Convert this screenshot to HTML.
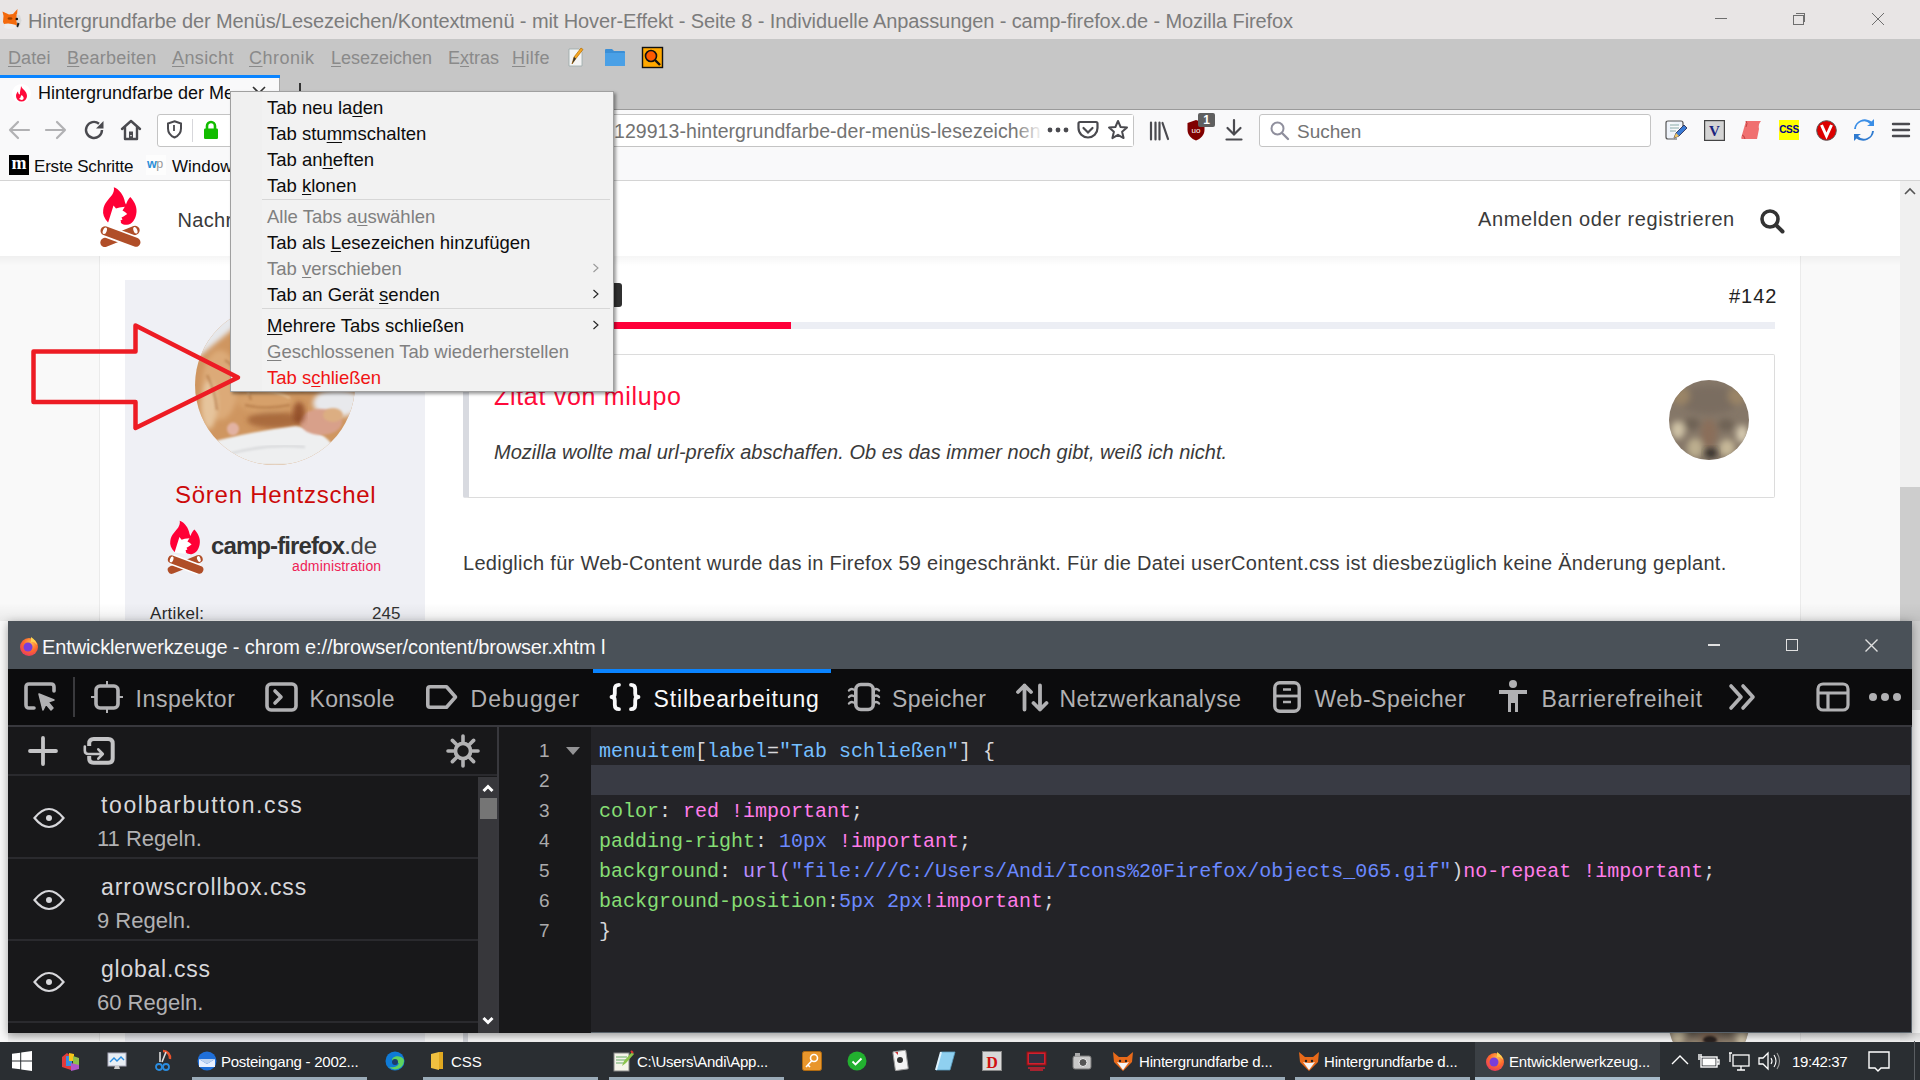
<!DOCTYPE html>
<html><head><meta charset="utf-8">
<style>
*{margin:0;padding:0;box-sizing:border-box}
html,body{width:1920px;height:1080px;overflow:hidden;background:#f9f9f9;font-family:"Liberation Sans",sans-serif}
.a{position:absolute}
.t{position:absolute;white-space:nowrap;line-height:1}
.u{text-decoration:underline;text-underline-offset:2px}
.m{font-family:"Liberation Mono",monospace}
svg{position:absolute;overflow:visible}
</style></head><body>

<!-- ============ TITLE BAR ============ -->
<div class="a" style="left:0;top:0;width:1920px;height:39px;background:#e8e5e5"></div>
<div class="t" style="left:28px;top:11px;font-size:20px;letter-spacing:-0.1px;color:#7c7c7c">Hintergrundfarbe der Menüs/Lesezeichen/Kontextmenü - mit Hover-Effekt - Seite 8 - Individuelle Anpassungen - camp-firefox.de - Mozilla Firefox</div>

<svg style="left:0;top:5px" width="30" height="30" viewBox="0 0 30 30"><path d="M2.5 6.5L9 9.5L13 9L17.5 4L17 10L16.5 16L17.5 20L14 21.5L5 21L3 17L3.5 11Z" fill="#f46a0c"/><path d="M16.5 9l3.5 1.5 1.5 5-1.5 5-3 1z" fill="#d8d8d8"/><path d="M4 19Q9 17.5 16 20L15 23.5Q9 24.5 4.5 23Z" fill="#ececec"/><circle cx="16.8" cy="14" r="1.3" fill="#111"/><path d="M17.5 17.5l2 1-1.5 4-1.5-1z" fill="#222"/><ellipse cx="10" cy="13.5" rx="2.5" ry="1.3" fill="#9a4000"/></svg>
<!-- ============ MENUBAR + TABSTRIP ============ -->
<div class="a" style="left:0;top:39px;width:1920px;height:71px;background:#c6c6c6"></div>
<div style="color:#8a8a8a;font-size:18px">
<div class="t" style="left:8px;top:49px;letter-spacing:0.1px"><span class="u">D</span>atei</div>
<div class="t" style="left:67px;top:49px;letter-spacing:0.24px"><span class="u">B</span>earbeiten</div>
<div class="t" style="left:172px;top:49px;letter-spacing:0.4px"><span class="u">A</span>nsicht</div>
<div class="t" style="left:249px;top:49px;letter-spacing:0.5px"><span class="u">C</span>hronik</div>
<div class="t" style="left:331px;top:49px;letter-spacing:0px"><span class="u">L</span>esezeichen</div>
<div class="t" style="left:448px;top:49px;letter-spacing:0px">E<span class="u">x</span>tras</div>
<div class="t" style="left:512px;top:49px;letter-spacing:0.4px"><span class="u">H</span>ilfe</div>
</div>
<!-- notepad icon -->
<svg style="left:566px;top:47px" width="20" height="20" viewBox="0 0 20 20">
<path d="M3 2h10l3 3v14H3z" fill="#f4f4f4" stroke="#9aa" stroke-width="0.8"/>
<path d="M6 17l2-7 7-9 2 1.5-7 9z" fill="#f5a623" stroke="#b36b00" stroke-width="0.7"/>
<path d="M6 17l2-7 2 1.5z" fill="#333"/>
</svg>
<!-- folder icon -->
<svg style="left:604px;top:47px" width="22" height="20" viewBox="0 0 22 20">
<path d="M1 3q0-1 1-1h6l2 2h10q1 0 1 1v13q0 1-1 1H2q-1 0-1-1z" fill="#3b8fd6"/>
<path d="M1 6h20v12q0 1-1 1H2q-1 0-1-1z" fill="#4aa0e6"/>
</svg>
<!-- orange search icon -->
<svg style="left:642px;top:47px" width="22" height="21" viewBox="0 0 22 21">
<rect x="0.5" y="0.5" width="20" height="20" fill="#ffa800" stroke="#111" stroke-width="1.4"/>
<circle cx="9" cy="9" r="5.5" fill="#ff5a00" stroke="#111" stroke-width="1.6"/>
<path d="M13 13l5 5" stroke="#111" stroke-width="2.4"/>
</svg>

<!-- selected tab -->
<div class="a" style="left:0;top:75px;width:280px;height:35px;background:#f9f9fa;border-right:1px solid #a8a8a8"></div>
<div class="a" style="left:0;top:75px;width:280px;height:3px;background:#0a84ff"></div>
<div class="a" style="left:12px;top:84px;width:19px;height:19px;border-radius:50%;background:#fff"></div>
<svg style="left:13px;top:86px" width="17" height="17" viewBox="0 0 17 17">
<path d="M8 0c1 3 6 5 6 10a5.5 5.5 0 0 1-11 0c0-2 1-3.5 2-4.5 0 2 1 3 2 3-.5-3 1-5.5 1-8.5z" fill="#ff0a3a"/>
<path d="M8.5 9c1.5 1 2.5 2 2 4a2.6 2.6 0 0 1-4.5-1c1 .5 1.5 0 1.5-1z" fill="#fff"/>
</svg>
<div class="t" style="left:38px;top:83px;width:192px;overflow:hidden;font-size:18px;color:#0c0c0d;letter-spacing:0px;line-height:20px">Hintergrundfarbe der Menüs</div>
<svg style="left:252px;top:86px" width="14" height="14" viewBox="0 0 14 14"><path d="M1 1l12 12M13 1L1 13" stroke="#333" stroke-width="1.6"/></svg>
<div class="a" style="left:299px;top:83px;width:2px;height:10px;background:#333"></div>

<!-- ============ NAV TOOLBAR ============ -->
<div class="a" style="left:281px;top:109px;width:1639px;height:1px;background:#9a9a9a"></div>
<div class="a" style="left:0;top:110px;width:1920px;height:70px;background:#f9f9fa"></div>
<div class="a" style="left:0;top:180px;width:1920px;height:1px;background:#d4d4d4"></div>
<!-- back / forward -->
<svg style="left:8px;top:120px" width="22" height="20" viewBox="0 0 22 20"><path d="M21 10H2M10 2L2 10l8 8" fill="none" stroke="#b1b1b3" stroke-width="2.2" stroke-linecap="round" stroke-linejoin="round"/></svg>
<svg style="left:45px;top:120px" width="22" height="20" viewBox="0 0 22 20"><path d="M1 10h19M12 2l8 8-8 8" fill="none" stroke="#b1b1b3" stroke-width="2.2" stroke-linecap="round" stroke-linejoin="round"/></svg>
<!-- reload -->
<svg style="left:84px;top:120px" width="22" height="20" viewBox="0 0 22 20"><path d="M18 10a8 8 0 1 1-3-6.3" fill="none" stroke="#4a4a4f" stroke-width="2.4"/><path d="M19.5 1v7.5H12z" fill="#4a4a4f"/></svg>
<!-- home -->
<svg style="left:120px;top:119px" width="22" height="22" viewBox="0 0 22 22"><path d="M2 10L11 2l9 8M5 8v12h12V8" fill="none" stroke="#4a4a4f" stroke-width="2.4" stroke-linejoin="round" stroke-linecap="round"/><rect x="9" y="12.5" width="4" height="7" fill="#4a4a4f"/><rect x="10.3" y="16" width="1.4" height="1.2" fill="#f9f9fa"/></svg>
<!-- url bar -->
<div class="a" style="left:157px;top:114px;width:977px;height:33px;background:#fff;border:1px solid #c4c4c4;border-radius:3px"></div>
<svg style="left:166px;top:120px" width="17" height="19" viewBox="0 0 17 19"><path d="M8.5 1.2L15 3.5v5c0 4.5-3 7.5-6.5 9-3.5-1.5-6.5-4.5-6.5-9v-5z" fill="none" stroke="#4a4a4f" stroke-width="2"/><path d="M8 5v6" stroke="#4a4a4f" stroke-width="1.8"/></svg>
<div class="a" style="left:192px;top:119px;width:1px;height:23px;background:#d7d7db"></div>
<svg style="left:203px;top:120px" width="16" height="20" viewBox="0 0 16 20"><path d="M4 9V6a4 4 0 0 1 8 0v3" fill="none" stroke="#12bc00" stroke-width="2.6"/><rect x="1" y="8.5" width="14" height="10.5" rx="1.2" fill="#12bc00"/></svg>
<div class="t" style="left:614px;top:121.5px;font-size:19.5px;color:#737373;letter-spacing:0.06px">129913-hintergrundfarbe-der-menüs-lesezeichen</div>
<div class="a" style="left:1015px;top:115px;width:28px;height:31px;background:linear-gradient(to right,rgba(255,255,255,0),#fff)"></div>
<div class="a" style="left:1043px;top:115px;width:90px;height:31px;background:#fff"></div>
<svg style="left:1047px;top:126px" width="22" height="8" viewBox="0 0 22 8"><circle cx="3" cy="4" r="2.4" fill="#4a4a4f"/><circle cx="11" cy="4" r="2.4" fill="#4a4a4f"/><circle cx="19" cy="4" r="2.4" fill="#4a4a4f"/></svg>
<svg style="left:1077px;top:120px" width="22" height="20" viewBox="0 0 22 20"><path d="M3 2h16q1.5 0 1.5 1.5V8a9.5 9.5 0 0 1-19 0V3.5Q1.5 2 3 2z" fill="none" stroke="#4a4a4f" stroke-width="2.2"/><path d="M6.5 8l4.5 4.5L15.5 8" fill="none" stroke="#4a4a4f" stroke-width="2.2" stroke-linecap="round"/></svg>
<svg style="left:1107px;top:119px" width="22" height="22" viewBox="0 0 22 22"><path d="M11 2l2.6 6 6.4.6-4.9 4.2 1.5 6.3L11 15.8 5.4 19.1l1.5-6.3L2 8.6l6.4-.6z" fill="none" stroke="#4a4a4f" stroke-width="2" stroke-linejoin="round"/></svg>
<!-- library -->
<svg style="left:1149px;top:121px" width="22" height="20" viewBox="0 0 22 20"><path d="M2 1.5v17M6.5 1.5v17M10.5 1.5v17M13.5 2l5.5 16" stroke="#4a4a4f" stroke-width="2.2" stroke-linecap="round"/></svg>
<!-- ublock -->
<svg style="left:1186px;top:119px" width="20" height="22" viewBox="0 0 20 22"><path d="M10 1l8.5 3v7c0 5-4 9-8.5 10.5C5.5 20 1.5 16 1.5 11V4z" fill="#800000"/><text x="10" y="14" font-size="8" fill="#fff" text-anchor="middle" font-family="Liberation Sans">uo</text></svg>
<div class="a" style="left:1198px;top:113px;width:17px;height:14px;background:#5f5f5f;border-radius:2px;color:#fff;font-size:12px;line-height:14px;text-align:center;font-weight:bold">1</div>
<!-- download -->
<svg style="left:1224px;top:119px" width="20" height="22" viewBox="0 0 20 22"><path d="M10 1v14M3.5 9l6.5 6.5L16.5 9M2.5 20.5h15" fill="none" stroke="#4a4a4f" stroke-width="2.2" stroke-linecap="round"/></svg>
<!-- search box -->
<div class="a" style="left:1259px;top:114px;width:392px;height:33px;background:#fff;border:1px solid #c4c4c4;border-radius:3px"></div>
<svg style="left:1270px;top:121px" width="20" height="20" viewBox="0 0 20 20"><circle cx="7.5" cy="7.5" r="6" fill="none" stroke="#8f8f9d" stroke-width="2"/><path d="M12 12l6 6" stroke="#8f8f9d" stroke-width="2.4" stroke-linecap="round"/></svg>
<div class="t" style="left:1297px;top:122px;font-size:19px;color:#737373">Suchen</div>
<!-- right icons -->
<svg style="left:1664px;top:119px" width="24" height="22" viewBox="0 0 24 22"><path d="M4 2h13q2 0 2 2v4M4 2q-2 0-2 2v14q0 2 2 2h9" fill="#eef3fa" stroke="#555" stroke-width="1.2"/><path d="M6 6h9M6 9h9M6 12h6" stroke="#8aa" stroke-width="1"/><path d="M10 19l2-5 8-8 3 3-8 8z" fill="#3a7bd5" stroke="#224" stroke-width="0.8"/><path d="M10 19l2-5 3 3z" fill="#f6c85f"/></svg>
<svg style="left:1704px;top:120px" width="21" height="21" viewBox="0 0 21 21"><rect x="0.6" y="0.6" width="19.8" height="19.8" fill="#d4d4d4" stroke="#444" stroke-width="1.2"/><text x="10.5" y="16" font-size="15" font-weight="bold" fill="#1a237e" text-anchor="middle" font-family="Liberation Serif">V</text></svg>
<svg style="left:1740px;top:120px" width="23" height="21" viewBox="0 0 23 21"><path d="M6 1h15q-3 3-2 8l-2 10H2q-1.5 0 0-4z" fill="#f07070"/><path d="M6 1q2 2 0 6" fill="none" stroke="#c04040" stroke-width="1"/><path d="M2 15q2 0 3 4" fill="none" stroke="#c04040" stroke-width="1"/></svg>
<div class="a" style="left:1779px;top:120px;width:20px;height:20px;background:#ffff00;color:#00008b;font-size:10px;font-weight:bold;line-height:20px;text-align:center;letter-spacing:-0.3px">CSS</div>
<svg style="left:1816px;top:120px" width="21" height="21" viewBox="0 0 21 21"><circle cx="10.5" cy="10.5" r="9.8" fill="#d00" stroke="#555" stroke-width="1"/><path d="M5.5 5l5 11 5-11" fill="none" stroke="#fff" stroke-width="3"/></svg>
<svg style="left:1853px;top:119px" width="22" height="22" viewBox="0 0 22 22"><path d="M3 10a8 8 0 0 1 14-5l-3 2h7V0l-2.5 2.5A11 11 0 0 0 1 10z" fill="#3a8ee6"/><path d="M19 12a8 8 0 0 1-14 5l3-2H1v7l2.5-2.5A11 11 0 0 0 21 12z" fill="#2f7bd0"/></svg>
<svg style="left:1892px;top:122px" width="18" height="16" viewBox="0 0 18 16"><path d="M1 2h16M1 8h16M1 14h16" stroke="#4a4a4f" stroke-width="2.4" stroke-linecap="round"/></svg>
<!-- window controls -->
<div class="a" style="left:1715px;top:18px;width:12px;height:1px;background:#6e6e6e"></div>
<div class="a" style="left:1793px;top:15px;width:11px;height:10px;border:1px solid #6e6e6e"></div>
<div class="a" style="left:1796px;top:13px;width:9px;height:9px;border-top:1px solid #6e6e6e;border-right:1px solid #6e6e6e"></div>
<svg style="left:1872px;top:13px" width="12" height="12" viewBox="0 0 12 12"><path d="M0 0l12 12M12 0L0 12" stroke="#6e6e6e" stroke-width="1"/></svg>
<!-- bookmarks toolbar -->
<div class="a" style="left:9px;top:155px;width:20px;height:20px;background:#000;color:#fff;font-family:'Liberation Serif';font-weight:bold;font-size:18px;line-height:17px;text-align:center">m</div>
<div class="t" style="left:34px;top:158px;font-size:17px;color:#0c0c0d;letter-spacing:-0.2px">Erste Schritte</div>
<div class="a" style="left:146px;top:155px;width:20px;height:20px;background:#fdfdfd"></div>
<div class="t" style="left:147px;top:158px;font-size:12.5px;font-weight:bold;color:#2d8fd8;letter-spacing:-0.6px">w<span style="color:#999;font-weight:normal">p</span></div>
<div class="t" style="left:172px;top:158px;font-size:17px;color:#0c0c0d">Windows</div>

<!-- ============ PAGE ============ -->
<div class="a" style="left:0;top:181px;width:1900px;height:75px;background:#fff"></div>
<div class="a" style="left:0;top:256px;width:1900px;height:785px;background:#f9f9f9"></div>
<div class="a" style="left:99px;top:256px;width:1702px;height:785px;background:#fff;border-left:1px solid #ebebeb;border-right:1px solid #ebebeb"></div>
<div class="a" style="left:1900px;top:181px;width:20px;height:860px;background:#f0f0f0"></div>
<div class="a" style="left:1900px;top:487px;width:20px;height:223px;background:#cdcdcd"></div>
<svg style="left:1903px;top:186px" width="14" height="10" viewBox="0 0 14 10"><path d="M2 8l5-5 5 5" fill="none" stroke="#555" stroke-width="1.6"/></svg>
<!-- header shadow -->
<div class="a" style="left:0;top:256px;width:1900px;height:10px;background:linear-gradient(rgba(0,0,0,0.04),rgba(0,0,0,0))"></div>
<!-- logo -->

<svg style="left:95px;top:183px" width="50" height="70" viewBox="0 0 50 70">
<path d="M18.8 4.2C24 6 29 12 30 19.5L31 21.5C32 18 33.5 16 35.3 14C39 18 42 23 41.5 29C41 36 37 41.5 32 41.8C27 42 25 40 26 38L13 39.5C9 35 7.5 31 8.2 27C9 20 14 16 17 12C18.5 9.5 19.5 7 18.8 4.2Z" fill="#ff0036"/>
<path d="M13 40L18.5 22.5L21 25.5L24.5 24.5L29.8 23.8L27.5 27.5L30 29L32.2 31L28.5 33.5L26.5 34.5L27.5 36.5L25.5 37.5L25 41.5Z" fill="#fff"/>
<path d="M9.8 59.5L40.2 47.3" stroke="#b04e28" stroke-width="9" stroke-linecap="round"/>
<path d="M10 47.8L41 59.3" stroke="#fff" stroke-width="12.5" stroke-linecap="butt"/>
<path d="M10 47.8L41 59.3" stroke="#b04e28" stroke-width="9" stroke-linecap="round"/>
<ellipse cx="9.8" cy="47.8" rx="1.9" ry="3.4" fill="#fff" transform="rotate(20 9.8 47.8)"/>
<ellipse cx="40.4" cy="47.3" rx="1.9" ry="3.4" fill="#fff" transform="rotate(-20 40.4 47.3)"/>
</svg>
<div class="t" style="left:177.5px;top:210px;font-size:20px;color:#3a3a3a;letter-spacing:0.3px">Nachrichten</div>
<div class="t" style="left:1478px;top:209px;font-size:20px;color:#3a3a3a;letter-spacing:0.6px">Anmelden oder registrieren</div>
<svg style="left:1759px;top:208px" width="27" height="26" viewBox="0 0 27 26"><circle cx="11" cy="11" r="8" fill="none" stroke="#333" stroke-width="3.6"/><path d="M17 17l6.5 6.5" stroke="#333" stroke-width="4" stroke-linecap="round"/></svg>
<!-- sidebar panel -->
<div class="a" style="left:125px;top:280px;width:300px;height:340px;background:#eff0f5"></div>
<svg style="left:195px;top:305px" width="160" height="160" viewBox="0 0 160 160">
<defs><clipPath id="cc"><circle cx="80" cy="80" r="80"/></clipPath><filter id="bl" x="-20%" y="-20%" width="140%" height="140%"><feGaussianBlur stdDeviation="2.5"/></filter><filter id="bl2"><feGaussianBlur stdDeviation="1"/></filter></defs>
<g clip-path="url(#cc)">
<rect width="160" height="160" fill="#cf9660"/>
<g filter="url(#bl)">
<path d="M0 0h70L40 22 18 40 0 55z" fill="#e6e8ec"/>
<ellipse cx="25" cy="80" rx="18" ry="35" fill="#dcaa78"/>
<ellipse cx="14" cy="100" rx="8" ry="24" fill="#e6c49c"/>
<ellipse cx="95" cy="55" rx="45" ry="28" fill="#d59a60"/>
<ellipse cx="70" cy="96" rx="28" ry="12" fill="#d6a06a"/>
<ellipse cx="80" cy="115" rx="28" ry="8" fill="#9a5a30" opacity="0.7"/>
<ellipse cx="142" cy="98" rx="24" ry="14" fill="#e8e9ec"/>
</g>
<path d="M0 142L24 135Q60 126 101 121Q124 124 136 138L160 146V160H0z" fill="#eeeff0" filter="url(#bl2)"/>
<path d="M30 150Q70 138 110 142" fill="none" stroke="#d9dadc" stroke-width="2.5" filter="url(#bl2)"/>
<ellipse cx="126" cy="117" rx="21" ry="13" fill="#d8a08a" filter="url(#bl2)"/>
<ellipse cx="138" cy="110" rx="10" ry="7" fill="#dcae82" filter="url(#bl2)"/>
<ellipse cx="104" cy="108" rx="6" ry="11" fill="#8a4424" opacity="0.8" filter="url(#bl)"/>
<ellipse cx="38" cy="124" rx="6" ry="6.5" fill="#e2b2a2" filter="url(#bl2)"/>
<path d="M30 55q18 12 26 40M12 70q8 15 10 35M70 78q20-6 38 8M60 40q30-5 60 10M85 65q15 3 30 15M50 100q20 5 45 0" fill="none" stroke="#a86c3a" stroke-width="2.5" opacity="0.5" filter="url(#bl2)"/>
<path d="M40 60q10 10 14 30M90 45q20 2 35 12M60 85q20 0 35 8" fill="none" stroke="#f0d2ac" stroke-width="2.5" opacity="0.55" filter="url(#bl2)"/>
</g></svg>
<div class="t" style="left:175px;top:483px;font-size:24px;color:#cc0a0a;letter-spacing:0.75px">Sören Hentzschel</div>
<svg style="left:163.3px;top:516.7px" width="44.4" height="62.2" viewBox="0 0 50 70">
<path d="M18.8 4.2C24 6 29 12 30 19.5L31 21.5C32 18 33.5 16 35.3 14C39 18 42 23 41.5 29C41 36 37 41.5 32 41.8C27 42 25 40 26 38L13 39.5C9 35 7.5 31 8.2 27C9 20 14 16 17 12C18.5 9.5 19.5 7 18.8 4.2Z" fill="#ff0036"/>
<path d="M13 40L18.5 22.5L21 25.5L24.5 24.5L29.8 23.8L27.5 27.5L30 29L32.2 31L28.5 33.5L26.5 34.5L27.5 36.5L25.5 37.5L25 41.5Z" fill="#fff"/>
<path d="M9.8 59.5L40.2 47.3" stroke="#b04e28" stroke-width="9" stroke-linecap="round"/>
<path d="M10 47.8L41 59.3" stroke="#fff" stroke-width="12.5" stroke-linecap="butt"/>
<path d="M10 47.8L41 59.3" stroke="#b04e28" stroke-width="9" stroke-linecap="round"/>
<ellipse cx="9.8" cy="47.8" rx="1.9" ry="3.4" fill="#fff" transform="rotate(20 9.8 47.8)"/>
<ellipse cx="40.4" cy="47.3" rx="1.9" ry="3.4" fill="#fff" transform="rotate(-20 40.4 47.3)"/>
</svg>
<div class="t" style="left:211px;top:534px;font-size:24px;font-weight:bold;color:#333;letter-spacing:-0.9px">camp-firefox<span style="font-weight:normal;color:#444;letter-spacing:-0.3px">.de</span></div>
<div class="t" style="left:292px;top:559px;font-size:14px;color:#ee2255;letter-spacing:0.15px">administration</div>
<div class="t" style="left:150px;top:604.6px;font-size:17px;color:#2a2a2a;letter-spacing:0.3px">Artikel:</div>
<div class="t" style="left:372px;top:604.6px;font-size:17px;color:#333">245</div>
<!-- post header -->
<div class="a" style="left:560px;top:283px;width:62px;height:24px;background:#303030;border-radius:3px"></div>
<div class="t" style="left:1729px;top:285.5px;font-size:20px;color:#222;letter-spacing:1px">#142</div>
<div class="a" style="left:463px;top:322px;width:1312px;height:7px;background:#eceef4"></div>
<div class="a" style="left:463px;top:322px;width:328px;height:7px;background:#ff0039"></div>
<!-- quote -->
<div class="a" style="left:463px;top:354px;width:1312px;height:144px;background:#fff;border:1px solid #dcdcdc;border-left:6px solid #d8dae0;border-radius:2px"></div>
<div class="t" style="left:494px;top:384px;font-size:25px;color:#ff0a3a;letter-spacing:0.7px">Zitat von milupo</div>
<div class="t" style="left:494px;top:442px;font-size:20px;font-style:italic;color:#3a3a3a;letter-spacing:0.02px">Mozilla wollte mal url-prefix abschaffen. Ob es das immer noch gibt, weiß ich nicht.</div>
<svg style="left:1669px;top:380px" width="80" height="80" viewBox="0 0 80 80">
<defs><clipPath id="wc"><circle cx="40" cy="40" r="40"/></clipPath><filter id="wb" x="-30%" y="-30%" width="160%" height="160%"><feGaussianBlur stdDeviation="3"/></filter></defs>
<g clip-path="url(#wc)"><rect width="80" height="80" fill="#857768"/>
<g filter="url(#wb)">
<ellipse cx="40" cy="20" rx="30" ry="14" fill="#7a6d60"/>
<ellipse cx="12" cy="16" rx="9" ry="9" fill="#9a8466"/>
<ellipse cx="68" cy="16" rx="9" ry="9" fill="#9a8466"/>
<ellipse cx="9" cy="50" rx="7" ry="9" fill="#cfc3a6"/>
<ellipse cx="73" cy="54" rx="6" ry="9" fill="#d6cab0"/>
<ellipse cx="26" cy="68" rx="8" ry="10" fill="#bcae8e"/>
<ellipse cx="58" cy="68" rx="8" ry="9" fill="#c6b898"/>
<ellipse cx="40" cy="54" rx="8" ry="15" fill="#8a6e5a"/>
<ellipse cx="23" cy="44" rx="8" ry="6" fill="#6e6254"/>
<ellipse cx="57" cy="45" rx="8" ry="6" fill="#6e6254"/>
</g>
<ellipse cx="42" cy="73" rx="6" ry="4.5" fill="#2a2622" filter="url(#wb)"/>
</g></svg>
<div class="t" style="left:463px;top:553px;font-size:20px;color:#3a3a3a;letter-spacing:0.285px">Lediglich für Web-Content wurde das in Firefox 59 eingeschränkt. Für die Datei userContent.css ist diesbezüglich keine Änderung geplant.</div>
<!-- bottom shadow under devtools window top -->
<div class="a" style="left:0;top:603px;width:1920px;height:18px;background:linear-gradient(rgba(0,0,0,0),rgba(0,0,0,0.06))"></div>

<div class="a" style="left:125px;top:1033px;width:300px;height:9px;background:#eff0f5"></div>
<div class="a" style="left:463px;top:1033px;width:5px;height:9px;background:#d8dae0"></div>
<svg style="left:1669px;top:985px" width="80" height="80" viewBox="0 0 80 80">
<defs><clipPath id="wc2"><circle cx="40" cy="40" r="40"/></clipPath><filter id="wb2" x="-30%" y="-30%" width="160%" height="160%"><feGaussianBlur stdDeviation="3"/></filter></defs>
<g clip-path="url(#wc2)"><rect width="80" height="80" fill="#857768"/>
<g filter="url(#wb2)">
<ellipse cx="40" cy="20" rx="30" ry="14" fill="#7a6d60"/>
<ellipse cx="12" cy="16" rx="9" ry="9" fill="#9a8466"/>
<ellipse cx="68" cy="16" rx="9" ry="9" fill="#9a8466"/>
<ellipse cx="9" cy="50" rx="7" ry="9" fill="#cfc3a6"/>
<ellipse cx="73" cy="54" rx="6" ry="9" fill="#d6cab0"/>
<ellipse cx="26" cy="68" rx="8" ry="10" fill="#bcae8e"/>
<ellipse cx="58" cy="68" rx="8" ry="9" fill="#c6b898"/>
<ellipse cx="40" cy="54" rx="8" ry="15" fill="#8a6e5a"/>
<ellipse cx="23" cy="44" rx="8" ry="6" fill="#6e6254"/>
<ellipse cx="57" cy="45" rx="8" ry="6" fill="#6e6254"/>
</g>
<ellipse cx="42" cy="73" rx="6" ry="4.5" fill="#2a2622" filter="url(#wb2)"/>
</g></svg>
<div class="a" style="left:1703px;top:1036px;width:14px;height:8px;border-radius:50%;background:#2a2220;filter:blur(1.2px)"></div>
<!-- ============ CONTEXT MENU ============ -->
<div class="a" style="left:230px;top:91px;width:384px;height:301px;background:#f2f2f2;border:1px solid #a0a0a0;box-shadow:2px 2px 3px rgba(0,0,0,0.38)"></div>
<div class="a" style="left:231px;top:92px;width:31px;height:299px;background:#f0f0f0"></div>
<div class="a" style="left:262px;top:199px;width:348px;height:1px;background:#d7d7d7"></div>
<div class="a" style="left:262px;top:308px;width:348px;height:1px;background:#d7d7d7"></div>
<div style="font-size:18.5px;color:#0c0c0c">
<div class="t" style="left:267px;top:99.3px">Tab neu la<span class="u">d</span>en</div>
<div class="t" style="left:267px;top:125.3px">Tab stu<span class="u">m</span>mschalten</div>
<div class="t" style="left:267px;top:151.3px">Tab an<span class="u">h</span>eften</div>
<div class="t" style="left:267px;top:177.3px">Tab <span class="u">k</span>lonen</div>
<div class="t" style="left:267px;top:208.3px;color:#808080">Alle Tabs a<span class="u">u</span>swählen</div>
<div class="t" style="left:267px;top:234.3px">Tab als <span class="u">L</span>esezeichen hinzufügen</div>
<div class="t" style="left:267px;top:260.3px;color:#808080">Tab <span class="u">v</span>erschieben</div>
<div class="t" style="left:267px;top:285.8px">Tab an Gerät <span class="u">s</span>enden</div>
<div class="t" style="left:267px;top:316.8px"><span class="u">M</span>ehrere Tabs schließen</div>
<div class="t" style="left:267px;top:343px;color:#808080"><span class="u">G</span>eschlossenen Tab wiederherstellen</div>
<div class="t" style="left:267px;top:369px;color:#f01414">Tab s<span class="u">c</span>hließen</div>
</div>
<svg style="left:592px;top:263px" width="8" height="10" viewBox="0 0 8 10"><path d="M1.5 1l4.5 4-4.5 4" fill="none" stroke="#999" stroke-width="1.1"/></svg>
<svg style="left:592px;top:289px" width="8" height="10" viewBox="0 0 8 10"><path d="M1.5 1l4.5 4-4.5 4" fill="none" stroke="#222" stroke-width="1.1"/></svg>
<svg style="left:592px;top:320px" width="8" height="10" viewBox="0 0 8 10"><path d="M1.5 1l4.5 4-4.5 4" fill="none" stroke="#222" stroke-width="1.1"/></svg>

<!-- ============ RED ARROW ============ -->
<svg style="left:0;top:0" width="300" height="450" viewBox="0 0 300 450"><path d="M33.5 351.5H135.5V325.5L238 377.5L135.5 428V402H33.5Z" fill="none" stroke="#ed1c24" stroke-width="4.5" stroke-linejoin="round"/></svg>

<!-- ============ DEVTOOLS ============ -->
<div class="a" style="left:8px;top:621px;width:1904px;height:412px;background:#232327;box-shadow:0 2px 9px rgba(0,0,0,0.35);border:1px solid #59626a"></div>
<div class="a" style="left:8px;top:621px;width:1904px;height:48px;background:#4a5158"></div>
<svg style="left:18px;top:635px" width="22" height="22" viewBox="0 0 22 22"><defs><radialGradient id="ffg" cx="0.6" cy="0.3" r="0.8"><stop offset="0" stop-color="#ffbd4f"/><stop offset="0.5" stop-color="#ff6a2b"/><stop offset="1" stop-color="#e3316b"/></radialGradient></defs><circle cx="11" cy="12" r="9" fill="url(#ffg)"/><circle cx="10" cy="12" r="4.5" fill="#7a3ddb"/><path d="M13 2q5 3 6 8-3-4-6-3z" fill="#ffd34f"/></svg>
<div class="t" style="left:42px;top:637px;font-size:20px;color:#f9f9fa;letter-spacing:-0.13px">Entwicklerwerkzeuge - chrom e://browser/content/browser.xhtm l</div>
<div class="a" style="left:1708px;top:644px;width:12px;height:1.5px;background:#e0e0e0"></div>
<div class="a" style="left:1786px;top:639px;width:12px;height:12px;border:1.5px solid #e0e0e0"></div>
<svg style="left:1865px;top:639px" width="13" height="13" viewBox="0 0 13 13"><path d="M.5.5l12 12M12.5.5l-12 12" stroke="#e0e0e0" stroke-width="1.4"/></svg>
<!-- toolbar -->
<div class="a" style="left:8px;top:669px;width:1904px;height:56px;background:#0c0c0d"></div>
<div class="a" style="left:8px;top:725px;width:1904px;height:2px;background:#38383d"></div>
<div class="a" style="left:593px;top:669px;width:238px;height:4px;background:#0a84ff"></div>
<svg style="left:24px;top:682px" width="34" height="30" viewBox="0 0 34 30" fill="none" stroke="#b1b1b3" stroke-width="3.6" stroke-linecap="round" stroke-linejoin="round"><path d="M10 26H5q-3 0-3-3V5q0-3 3-3h22q3 0 3 3v4"/><path d="M15 12l15 6-6 2 5 6-2 2-5-6-3 6z" fill="#b1b1b3" stroke-width="1.5"/></svg>
<div class="a" style="left:73px;top:677px;width:2px;height:40px;background:#3a3a3d"></div>
<svg style="left:90px;top:680px" width="34" height="34" viewBox="0 0 34 34" fill="none" stroke="#b1b1b3" stroke-width="3.6"><rect x="6" y="6" width="22" height="22" rx="4"/><path d="M17 1v5M17 28v5M1 17h5M28 17h5" stroke-width="2"/></svg>
<div class="t" style="left:135.5px;top:688px;font-size:23px;color:#b1b1b3;letter-spacing:0.6px">Inspektor</div>
<svg style="left:265px;top:682px" width="34" height="30" viewBox="0 0 34 30" fill="none" stroke="#b1b1b3" stroke-width="3.6"><rect x="2" y="2" width="29" height="26" rx="4"/><path d="M10 9l6 6-6 6" stroke-linecap="round" stroke-linejoin="round"/></svg>
<div class="t" style="left:309.5px;top:688px;font-size:23px;color:#b1b1b3;letter-spacing:0.3px">Konsole</div>
<svg style="left:425px;top:682px" width="44" height="30" viewBox="0 0 44 30" fill="none" stroke="#b1b1b3" stroke-width="3.6" stroke-linejoin="round"><path d="M5 4.8H21.5L30.5 15L21.5 25.2H5Q2.8 25.2 2.8 23V7Q2.8 4.8 5 4.8Z"/></svg>
<div class="t" style="left:470.5px;top:688px;font-size:23px;color:#b1b1b3;letter-spacing:1.1px">Debugger</div>
<svg style="left:608px;top:681px" width="34" height="32" viewBox="0 0 34 32" fill="none" stroke="#f9f9fa" stroke-width="3.8" stroke-linecap="round" stroke-linejoin="round"><path d="M11 3.8Q6.8 3.8 6.8 8V12.5Q6.8 16 3.5 16Q6.8 16 6.8 19.5V24Q6.8 28.2 11 28.2M23 3.8Q27.2 3.8 27.2 8V12.5Q27.2 16 30.5 16Q27.2 16 27.2 19.5V24Q27.2 28.2 23 28.2"/></svg>
<div class="t" style="left:653.5px;top:688px;font-size:23px;color:#f9f9fa;letter-spacing:0.85px">Stilbearbeitung</div>
<svg style="left:847px;top:681px" width="34" height="32" viewBox="0 0 34 32" fill="none" stroke="#b1b1b3" stroke-width="3.6"><rect x="8.8" y="3.5" width="17.4" height="25" rx="5"/><path d="M2 9.5q2-2.2 4.5-1M2 16q2-2.2 4.5-1M2 22.5q2-2.2 4.5-1M32 9.5q-2-2.2-4.5-1M32 16q-2-2.2-4.5-1M32 22.5q-2-2.2-4.5-1" stroke-width="2.4" stroke-linecap="round"/></svg>
<div class="t" style="left:892px;top:688px;font-size:23px;color:#b1b1b3;letter-spacing:0.45px">Speicher</div>
<svg style="left:1015px;top:681px" width="34" height="32" viewBox="0 0 34 32" fill="none" stroke="#b1b1b3" stroke-width="3.8" stroke-linecap="round" stroke-linejoin="round"><path d="M9.5 28.5V4.5M3 11l6.5-6.5L16 11M25 4.5v24M18.5 22l6.5 6.5 6.5-6.5"/></svg>
<div class="t" style="left:1059.5px;top:688px;font-size:23px;color:#b1b1b3;letter-spacing:0.45px">Netzwerkanalyse</div>
<svg style="left:1272px;top:680px" width="30" height="34" viewBox="0 0 30 34" fill="none" stroke="#b1b1b3" stroke-width="3.4"><rect x="2.8" y="2.8" width="24.4" height="28.4" rx="5"/><path d="M2.8 16H27.2" stroke-width="2.8"/><path d="M11 9.5H19M11 22H19" stroke-width="2.4"/></svg>
<div class="t" style="left:1314.5px;top:688px;font-size:23px;color:#b1b1b3;letter-spacing:0.5px">Web-Speicher</div>
<svg style="left:1498px;top:680px" width="30" height="34" viewBox="0 0 30 34" fill="#b1b1b3"><circle cx="15" cy="4" r="4"/><path d="M1 10h28v4h-9v18h-3v-9h-4v9h-3V14H1z"/></svg>
<div class="t" style="left:1541.5px;top:688px;font-size:23px;color:#b1b1b3;letter-spacing:0.65px">Barrierefreiheit</div>
<svg style="left:1728px;top:684px" width="28" height="26" viewBox="0 0 28 26" fill="none" stroke="#b1b1b3" stroke-width="3.6" stroke-linecap="round" stroke-linejoin="round"><path d="M3 2l10 11L3 24M15 2l10 11-10 11"/></svg>
<svg style="left:1816px;top:682px" width="34" height="30" viewBox="0 0 34 30" fill="none" stroke="#b1b1b3" stroke-width="3.2"><rect x="2" y="2" width="30" height="26" rx="5"/><path d="M2 11h30M12 11v17"/></svg>
<svg style="left:1868px;top:690px" width="34" height="14" viewBox="0 0 34 14" fill="#b1b1b3"><circle cx="5" cy="7" r="4"/><circle cx="17" cy="7" r="4"/><circle cx="29" cy="7" r="4"/></svg>
<!-- sidebar -->
<div class="a" style="left:8px;top:727px;width:489px;height:306px;background:#18181a"></div>
<div class="a" style="left:8px;top:774px;width:489px;height:2px;background:#2a2a2e"></div>
<svg style="left:28px;top:736px" width="30" height="30" viewBox="0 0 30 30" stroke="#c4c4c6" stroke-width="3.8" stroke-linecap="round"><path d="M15 2v26M2 15h26"/></svg>
<svg style="left:80px;top:734px" width="40" height="34" viewBox="0 0 40 34" fill="none" stroke="#c4c4c6" stroke-linecap="round" stroke-linejoin="round"><path d="M9.2 12V9.5Q9.2 5 13.7 5H28.2Q32.7 5 32.7 9.5V24.3Q32.7 28.8 28.2 28.8H13.7Q9.2 28.8 9.2 24.3V22" stroke-width="4" stroke-linecap="butt"/><path d="M4.8 12.5V16.5Q4.8 20 8.3 20H22.5M18.3 15.3L22.8 20L18.3 24.7" stroke-width="2.6"/></svg>
<svg style="left:446px;top:734px" width="34" height="34" viewBox="0 0 34 34" fill="none" stroke="#b1b1b3"><circle cx="17" cy="17" r="7.6" stroke-width="3.8"/><path d="M26.50 17.00L32.00 17.00M23.72 23.72L27.61 27.61M17.00 26.50L17.00 32.00M10.28 23.72L6.39 27.61M7.50 17.00L2.00 17.00M10.28 10.28L6.39 6.39M17.00 7.50L17.00 2.00M23.72 10.28L27.61 6.39" stroke-width="3.6" stroke-linecap="round"/></svg>
<div class="a" style="left:478px;top:777px;width:19px;height:256px;background:#37373b"></div>
<div class="a" style="left:480px;top:798px;width:17px;height:21px;background:#757575"></div>
<svg style="left:481px;top:783px" width="14" height="10" viewBox="0 0 14 10"><path d="M2.5 8l4.5-4.5 4.5 4.5" fill="none" stroke="#fff" stroke-width="3"/></svg>
<svg style="left:481px;top:1016px" width="14" height="10" viewBox="0 0 14 10"><path d="M2.5 2l4.5 4.5 4.5-4.5" fill="none" stroke="#fff" stroke-width="3"/></svg>
<div class="a" style="left:8px;top:857px;width:470px;height:2px;background:#2a2a2e"></div>
<div class="a" style="left:8px;top:939px;width:470px;height:2px;background:#2a2a2e"></div>
<div class="a" style="left:8px;top:1021px;width:470px;height:2px;background:#2a2a2e"></div>
<svg style="left:33px;top:807px" width="32" height="22" viewBox="0 0 32 22" fill="none" stroke="#d7d7db" stroke-width="2.2"><path d="M1.5 11Q16-7 30.5 11 16 29 1.5 11z"/><circle cx="16" cy="11" r="3" fill="#d7d7db" stroke="none"/></svg>
<svg style="left:33px;top:889px" width="32" height="22" viewBox="0 0 32 22" fill="none" stroke="#d7d7db" stroke-width="2.2"><path d="M1.5 11Q16-7 30.5 11 16 29 1.5 11z"/><circle cx="16" cy="11" r="3" fill="#d7d7db" stroke="none"/></svg>
<svg style="left:33px;top:971px" width="32" height="22" viewBox="0 0 32 22" fill="none" stroke="#d7d7db" stroke-width="2.2"><path d="M1.5 11Q16-7 30.5 11 16 29 1.5 11z"/><circle cx="16" cy="11" r="3" fill="#d7d7db" stroke="none"/></svg>
<div class="t" style="left:101px;top:793.5px;font-size:23px;color:#d7d7db;letter-spacing:1.6px">toolbarbutton.css</div>
<div class="t" style="left:97px;top:828.2px;font-size:22px;color:#b1b1b3;letter-spacing:0px">11 Regeln.</div>
<div class="t" style="left:101px;top:875.5px;font-size:23px;color:#d7d7db;letter-spacing:0.95px">arrowscrollbox.css</div>
<div class="t" style="left:97px;top:910.3px;font-size:22px;color:#b1b1b3;letter-spacing:0px">9 Regeln.</div>
<div class="t" style="left:101px;top:957.5px;font-size:23px;color:#d7d7db;letter-spacing:0.75px">global.css</div>
<div class="t" style="left:97px;top:992.2px;font-size:22px;color:#b1b1b3;letter-spacing:0px">60 Regeln.</div>
<!-- divider -->
<div class="a" style="left:497px;top:727px;width:2px;height:306px;background:#38383d"></div>
<!-- editor -->
<div class="a" style="left:499px;top:727px;width:92px;height:306px;background:#18181a"></div>
<div class="a" style="left:591px;top:765px;width:1319px;height:30px;background:#393b44"></div>
<div style="font-size:19px;color:#ababad">
<div class="t" style="left:519.5px;top:741px;width:30px;text-align:right">1</div>
<div class="t" style="left:519.5px;top:771px;width:30px;text-align:right">2</div>
<div class="t" style="left:519.5px;top:801px;width:30px;text-align:right">3</div>
<div class="t" style="left:519.5px;top:831px;width:30px;text-align:right">4</div>
<div class="t" style="left:519.5px;top:861px;width:30px;text-align:right">5</div>
<div class="t" style="left:519.5px;top:891px;width:30px;text-align:right">6</div>
<div class="t" style="left:519.5px;top:921px;width:30px;text-align:right">7</div>
</div>
<svg style="left:566px;top:747px" width="14" height="9" viewBox="0 0 14 9"><path d="M0 0h14L7 8z" fill="#939395"/></svg>
<div class="m" style="position:absolute;left:599px;top:737px;font-size:20px;line-height:30px;color:#d7d7db">
<div style="white-space:pre;height:30px"><span style="color:#75bfff">menuitem</span>[<span style="color:#75bfff">label</span>=<span style="color:#75bfff">"Tab schließen"</span>] {</div>
<div style="white-space:pre;height:30px"> </div>
<div style="white-space:pre;height:30px"><span style="color:#86de74">color</span>: <span style="color:#ff7de9">red !important</span>;</div>
<div style="white-space:pre;height:30px"><span style="color:#86de74">padding-right</span>: <span style="color:#6b89ff">10px</span> <span style="color:#ff7de9">!important</span>;</div>
<div style="white-space:pre;height:30px"><span style="color:#86de74">background</span>: <span style="color:#b98eff">url(</span><span style="color:#6b89ff">"file:///C:/Users/Andi/Icons%20Firefox/objects_065.gif"</span>)<span style="color:#ff7de9">no-repeat !important</span>;</div>
<div style="white-space:pre;height:30px"><span style="color:#86de74">background-position</span>:<span style="color:#6b89ff">5px 2px</span><span style="color:#ff7de9">!important</span>;</div>
<div style="white-space:pre;height:30px">}</div>
</div>

<!-- ============ TASKBAR ============ -->
<div class="a" style="left:8px;top:1033px;width:1912px;height:9px;background:linear-gradient(rgba(0,0,0,0.1),rgba(0,0,0,0.02))"></div>
<div class="a" style="left:0;top:1042px;width:1920px;height:38px;background:#2a2e32"></div>
<div class="a" style="left:1475px;top:1042px;width:185px;height:38px;background:#3b4045"></div>
<div class="a" style="left:192px;top:1077px;width:175px;height:3px;background:#9aabb8"></div>
<div class="a" style="left:423px;top:1077px;width:175px;height:3px;background:#9aabb8"></div>
<div class="a" style="left:609px;top:1077px;width:175px;height:3px;background:#9aabb8"></div>
<div class="a" style="left:1110px;top:1077px;width:175px;height:3px;background:#9aabb8"></div>
<div class="a" style="left:1295px;top:1077px;width:175px;height:3px;background:#9aabb8"></div>
<div class="a" style="left:1475px;top:1077px;width:185px;height:3px;background:#a8bccb"></div>
<!-- windows logo -->
<svg style="left:12px;top:1051px" width="20" height="20" viewBox="0 0 20 20" fill="#fff"><path d="M0 2.8l8.2-1.1v7.9H0zM9.2 1.5L20 0v9.6H9.2zM0 10.4h8.2v7.9L0 17.2zM9.2 10.4H20V20L9.2 18.5z"/></svg>
<!-- colorful app -->
<svg style="left:61px;top:1051px" width="20" height="20" viewBox="0 0 20 20"><path d="M1 6l5-4 4 3v14l-9-3z" fill="#e23b3b"/><path d="M5 5h6v10H5z" fill="#3a8fe0"/><path d="M8 2l5 1v7H8z" fill="#f5c518"/><path d="M12 5l6 2v9l-6 2z" fill="#8fc04a"/><path d="M10 12l8 2v4l-8 2z" fill="#b056c8"/></svg>
<!-- monitor -->
<svg style="left:107px;top:1052px" width="20" height="19" viewBox="0 0 20 19"><rect x="1" y="1" width="18" height="13" fill="#e8eef4" stroke="#aab" stroke-width="1"/><path d="M3 10l4-4 3 3 4-4 3 3" fill="none" stroke="#2a8de0" stroke-width="1.4"/><path d="M7 17h6l-1-3H8z" fill="#ccc"/></svg>
<!-- scissors -->
<svg style="left:154px;top:1050px" width="18" height="22" viewBox="0 0 18 22"><path d="M9 1a7 7 0 0 1 7 8" fill="none" stroke="#e8522c" stroke-width="2.4"/><path d="M6 2v10M12 2L8 12" stroke="#ddd" stroke-width="1.6"/><circle cx="5" cy="17" r="3" fill="none" stroke="#2a8de0" stroke-width="1.8"/><circle cx="12" cy="17" r="3" fill="none" stroke="#2a8de0" stroke-width="1.8"/></svg>
<!-- thunderbird -->
<svg style="left:196px;top:1050px" width="21" height="22" viewBox="0 0 21 22"><circle cx="11" cy="11" r="9.5" fill="#1f6fd8"/><path d="M3 9l8 5 8-5v8H3z" fill="#e8f0ff"/><path d="M3 9h16l-8 5z" fill="#c0d4f0"/></svg>
<div class="t" style="left:221px;top:1054px;font-size:15px;color:#fff;letter-spacing:-0.25px">Posteingang - 2002...</div>
<!-- edge -->
<svg style="left:385px;top:1051px" width="20" height="20" viewBox="0 0 20 20"><circle cx="10" cy="10" r="9.5" fill="#0f7bd7"/><path d="M19 10a9 9 0 0 1-15 6c4 1 9 0 10-4-3 1-6 0-7-3 0-3 5-5 9-3 2 1 3 2 3 4z" fill="#5fd35f"/><circle cx="10" cy="11" r="3" fill="#1c3d6e"/></svg>
<!-- folder -->
<svg style="left:430px;top:1051px" width="14" height="20" viewBox="0 0 14 20"><path d="M1 3l8-2v18l-8-2z" fill="#f0c040"/><path d="M9 1h4v17H9z" fill="#e0a820"/></svg>
<div class="t" style="left:451px;top:1054px;font-size:15px;color:#fff">CSS</div>
<!-- notepad++ -->
<svg style="left:613px;top:1050px" width="21" height="22" viewBox="0 0 21 22"><rect x="1" y="3" width="15" height="18" fill="#f4f4e8" stroke="#888" stroke-width="1"/><path d="M3 7h11M3 10h11M3 13h8" stroke="#6a6" stroke-width="1"/><path d="M9 16l2-5 8-9 2 2-8 9z" fill="#8bc34a"/><path d="M18 1l2 2" stroke="#d33" stroke-width="2"/></svg>
<div class="t" style="left:637px;top:1054px;font-size:15px;color:#fff;letter-spacing:-0.25px">C:\Users\Andi\App...</div>
<svg style="left:802px;top:1051px" width="20" height="20" viewBox="0 0 20 20"><rect x="0.5" y="0.5" width="19" height="19" rx="2" fill="#e8962c" stroke="#b06a10"/><circle cx="12" cy="7" r="3.5" fill="none" stroke="#fff" stroke-width="1.6"/><path d="M10 9.5L4 16M6 14l2 2" stroke="#fff" stroke-width="1.6"/></svg>
<svg style="left:847px;top:1051px" width="20" height="20" viewBox="0 0 20 20"><circle cx="10" cy="10" r="9.5" fill="#22b02f"/><path d="M5.5 10.5l3 3 6-6" fill="none" stroke="#fff" stroke-width="1.8"/></svg>
<svg style="left:892px;top:1050px" width="17" height="22" viewBox="0 0 17 22"><rect x="2" y="1" width="13" height="19" rx="1" fill="#f4f4f4" stroke="#999" transform="rotate(-8 8 10)"/><circle cx="8" cy="10" r="3" fill="#333"/><path d="M3 2h3v3" fill="#c33"/></svg>
<svg style="left:935px;top:1051px" width="21" height="20" viewBox="0 0 21 20"><path d="M6 1h14l-5 18H1z" fill="#8fd0f0" stroke="#5a9ec0" stroke-width="0.8"/><path d="M6 1l-5 18" stroke="#e0f4ff" stroke-width="2"/></svg>
<svg style="left:982px;top:1051px" width="20" height="20" viewBox="0 0 20 20"><rect x="0.5" y="0.5" width="19" height="19" fill="#d8d8d8" stroke="#888"/><text x="10" y="16.5" font-size="16" font-weight="bold" fill="#d01010" text-anchor="middle" font-family="Liberation Serif">D</text></svg>
<svg style="left:1026px;top:1050px" width="21" height="22" viewBox="0 0 21 22"><rect x="1" y="2" width="19" height="13" fill="#d02030" stroke="#901010"/><rect x="3" y="4" width="15" height="9" fill="#303040"/><path d="M2 18h17M4 20h13" stroke="#d02030" stroke-width="1.5"/></svg>
<svg style="left:1072px;top:1051px" width="20" height="20" viewBox="0 0 20 20"><rect x="1" y="5" width="18" height="13" rx="2" fill="#c8c8c8" stroke="#777"/><circle cx="11" cy="11.5" r="4" fill="#555" stroke="#eee"/><rect x="3" y="2" width="5" height="3" fill="#aaa"/></svg>
<!-- fox -->
<svg style="left:1112px;top:1050px" width="22" height="22" viewBox="0 0 22 22"><path d="M1 2l6 5h8l6-5-1 10-9 9-9-9z" fill="#e86a1a"/><path d="M5 12q6 2 12 0l-6 8z" fill="#f4f4f4"/><circle cx="8" cy="11" r="1.2" fill="#222"/><circle cx="14" cy="11" r="1.2" fill="#222"/></svg>
<div class="t" style="left:1139px;top:1054px;font-size:15px;color:#fff;letter-spacing:-0.2px">Hintergrundfarbe d...</div>
<svg style="left:1298px;top:1050px" width="22" height="22" viewBox="0 0 22 22"><path d="M1 2l6 5h8l6-5-1 10-9 9-9-9z" fill="#e86a1a"/><path d="M5 12q6 2 12 0l-6 8z" fill="#f4f4f4"/><circle cx="8" cy="11" r="1.2" fill="#222"/><circle cx="14" cy="11" r="1.2" fill="#222"/></svg>
<div class="t" style="left:1324px;top:1054px;font-size:15px;color:#fff;letter-spacing:-0.2px">Hintergrundfarbe d...</div>
<svg style="left:1484px;top:1050px" width="22" height="22" viewBox="0 0 22 22"><defs><radialGradient id="ffg2" cx="0.6" cy="0.3" r="0.8"><stop offset="0" stop-color="#ffbd4f"/><stop offset="0.5" stop-color="#ff6a2b"/><stop offset="1" stop-color="#e3316b"/></radialGradient></defs><circle cx="11" cy="12" r="9" fill="url(#ffg2)"/><circle cx="10" cy="12" r="4.5" fill="#7a3ddb"/><path d="M13 2q5 3 6 8-3-4-6-3z" fill="#ffd34f"/></svg>
<div class="t" style="left:1509px;top:1054px;font-size:15px;color:#fff;letter-spacing:-0.2px">Entwicklerwerkzeug...</div>
<!-- tray -->
<svg style="left:1671px;top:1055px" width="18" height="10" viewBox="0 0 18 10"><path d="M1 9l8-8 8 8" fill="none" stroke="#fff" stroke-width="1.4"/></svg>
<svg style="left:1698px;top:1052px" width="22" height="18" viewBox="0 0 22 18" fill="none" stroke="#fff" stroke-width="1.4"><rect x="3" y="5" width="16" height="10"/><path d="M19 8h2v4h-2M1 2v6M3 2v3" /><rect x="4.5" y="6.5" width="13" height="7" fill="#fff" stroke="none"/></svg>
<svg style="left:1728px;top:1052px" width="22" height="20" viewBox="0 0 22 20" fill="none" stroke="#fff" stroke-width="1.3"><rect x="5" y="3" width="16" height="11"/><path d="M13 14v4M9 18h8M2 1v9M1 1h3"/></svg>
<svg style="left:1758px;top:1051px" width="22" height="20" viewBox="0 0 22 20" fill="none" stroke="#fff" stroke-width="1.3"><path d="M1 7h4l5-5v16l-5-5H1z"/><path d="M13 7q2 3 0 6M16 4q4 6 0 12" stroke-width="1.1"/><path d="M19 2q5 8 0 16" stroke="#999" stroke-width="1.1"/></svg>
<div class="t" style="left:1792px;top:1054px;font-size:15px;color:#fff;letter-spacing:-0.4px">19:42:37</div>
<svg style="left:1868px;top:1051px" width="22" height="22" viewBox="0 0 22 22" fill="none" stroke="#fff" stroke-width="1.4"><path d="M1 1h20v16h-8l-3 3-3-3H1z"/></svg>
<div class="a" style="left:1914px;top:1041px;width:1px;height:39px;background:#5a5e62"></div>

</body></html>
